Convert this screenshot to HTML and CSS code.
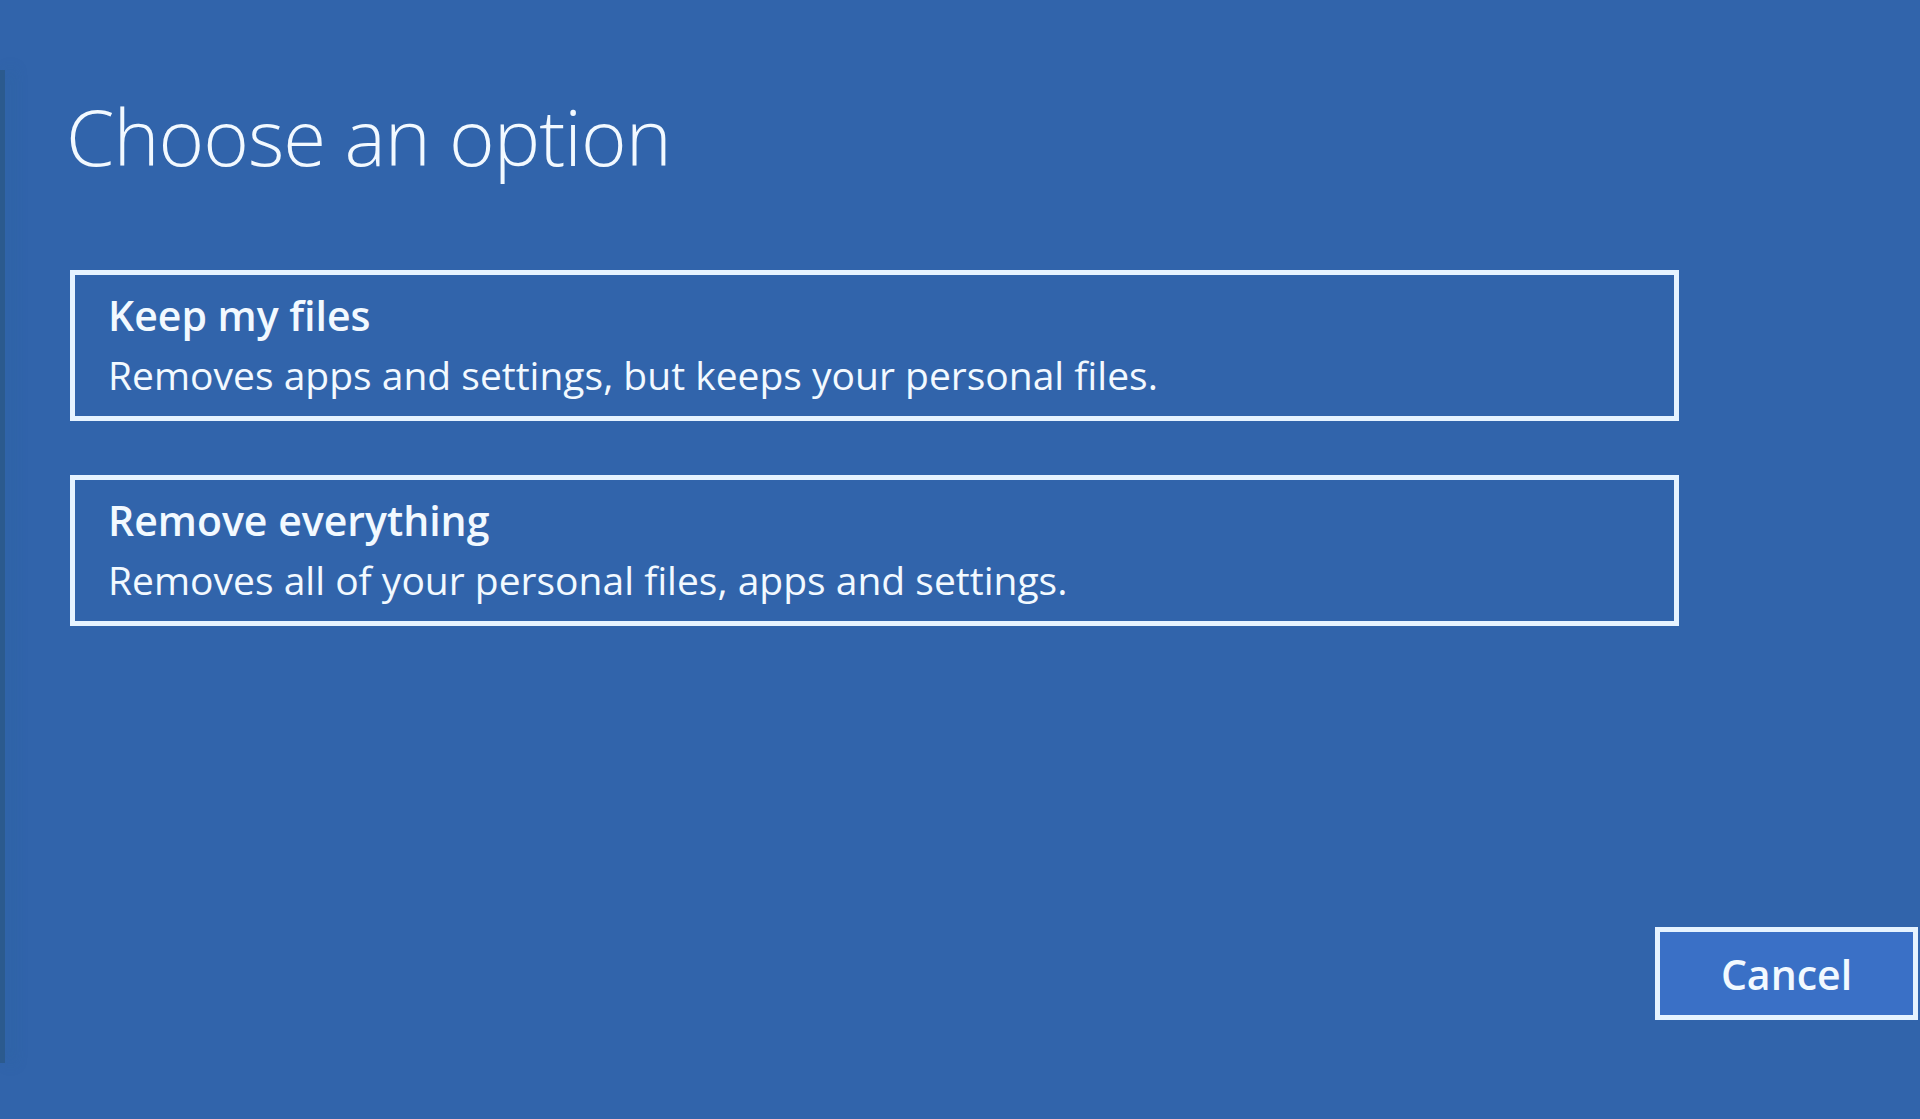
FILE: index.html
```html
<!DOCTYPE html>
<html lang="en">
<head>
    <meta charset="UTF-8">
    <meta name="viewport" content="width=device-width, initial-scale=1">
    <title>Choose an option</title>
    <link rel="stylesheet" href="styles.css">
</head>
<body>

    <div class="screen">
        <h1 class="title">Choose an option</h1>

        <div class="options">
            <button class="option">
                <span class="option-name">Keep my files</span>
                <span class="option-desc">Removes apps and settings, but keeps your personal files.</span>
            </button>
            <button class="option">
                <span class="option-name">Remove everything</span>
                <span class="option-desc">Removes all of your personal files, apps and settings.</span>
            </button>
        </div>

        <div class="footer">
            <button class="cancel-button">Cancel</button>
        </div>
    </div>

</body>
</html>
```

FILE: styles.css
```css
body {
    background-color: #3164ab;
    color: #f2f9ff;
    font-family: 'Open Sans', 'Noto Sans', sans-serif;
    margin: 0;
    padding: 0;
    height: 100vh;
    overflow: hidden;
    position: relative;
}

/* borda escura do lado esquerdo */
body::before {
    content: "";
    position: absolute;
    top: 70px;
    left: 0;
    width: 5px;
    height: 993px;
    background-color: #2b5a8e;
    box-shadow: 8px 0 14px rgba(40, 100, 150, 0.35);
}

.screen {
    display: flex;
    flex-direction: column;
    height: 100%;
    padding-left: 70px;
    box-sizing: border-box;
}

.title {
    font-size: 78px;
    font-weight: 300;
    letter-spacing: -1px;
    line-height: 1;
    margin: 97px 0 0 -4px;
}

.options {
    display: flex;
    flex-direction: column;
    gap: 54px;
    width: 1609px;
    margin-top: 95px;
}

.option {
    display: flex;
    flex-direction: column;
    align-items: flex-start;
    background: transparent;
    border: 5px solid #e6f3ff;
    color: inherit;
    font-family: inherit;
    padding: 16px 33px 0;
    height: 151px;
    box-sizing: border-box;
    text-align: left;
    cursor: pointer;
}

.option-name {
    font-size: 41px;
    font-weight: 600;
    line-height: 48px;
}

.option-desc {
    font-size: 39px;
    font-weight: 400;
    line-height: 50px;
    margin-top: 11px;
}

.footer {
    display: flex;
    justify-content: flex-end;
    margin-top: auto;
    padding: 0 2px 99px 0;
}

.cancel-button {
    width: 263px;
    height: 93px;
    background-color: #3a70c6;
    border: 5px solid #e6f3ff;
    color: #f2f9ff;
    font-family: inherit;
    font-size: 41px;
    font-weight: 600;
    cursor: pointer;
}
```
